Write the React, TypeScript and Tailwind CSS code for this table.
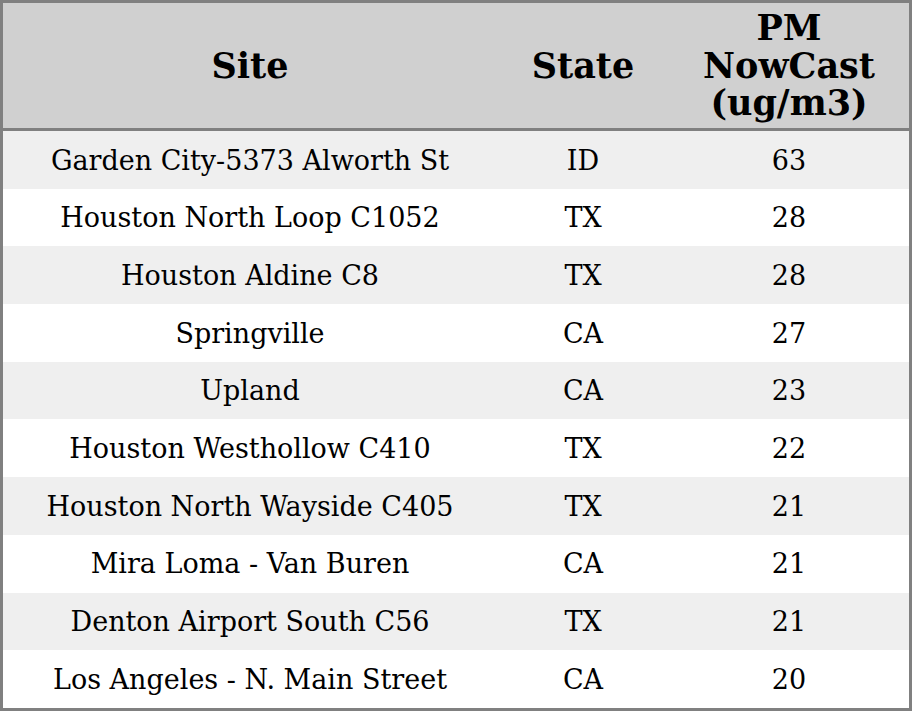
const rows = [
    { site: "Garden City-5373 Alworth St", state: "ID", pm: 63 },
    { site: "Houston North Loop C1052", state: "TX", pm: 28 },
    { site: "Houston Aldine C8", state: "TX", pm: 28 },
    { site: "Springville", state: "CA", pm: 27 },
    { site: "Upland", state: "CA", pm: 23 },
    { site: "Houston Westhollow C410", state: "TX", pm: 22 },
    { site: "Houston North Wayside C405", state: "TX", pm: 21 },
    { site: "Mira Loma - Van Buren", state: "CA", pm: 21 },
    { site: "Denton Airport South C56", state: "TX", pm: 21 },
    { site: "Los Angeles - N. Main Street", state: "CA", pm: 20 },
];

export default function App() {
    return (
        <div className="w-[912px] h-[711px] border-[3px] border-[#808080] bg-white text-black font-['DejaVu_Serif',serif]">
            <div className="grid grid-cols-[494px_172px_240px] h-[128px] bg-[#d0d0d0] border-b-[3px] border-[#808080] text-[35px] font-bold leading-[37.5px] text-center">
                <div className="flex items-center justify-center">Site</div>
                <div className="flex items-center justify-center">State</div>
                <div className="flex items-center justify-center">PM<br />NowCast<br />(ug/m3)</div>
            </div>
            {rows.map((row, index) => (
                <div
                    key={row.site}
                    className={`grid grid-cols-[494px_172px_240px] h-[57.7px] pt-[2px] items-center text-center text-[27px] ${index % 2 === 0 ? "bg-[#efefef]" : "bg-white"}`}
                >
                    <div>{row.site}</div>
                    <div>{row.state}</div>
                    <div>{row.pm}</div>
                </div>
            ))}
        </div>
    );
}
